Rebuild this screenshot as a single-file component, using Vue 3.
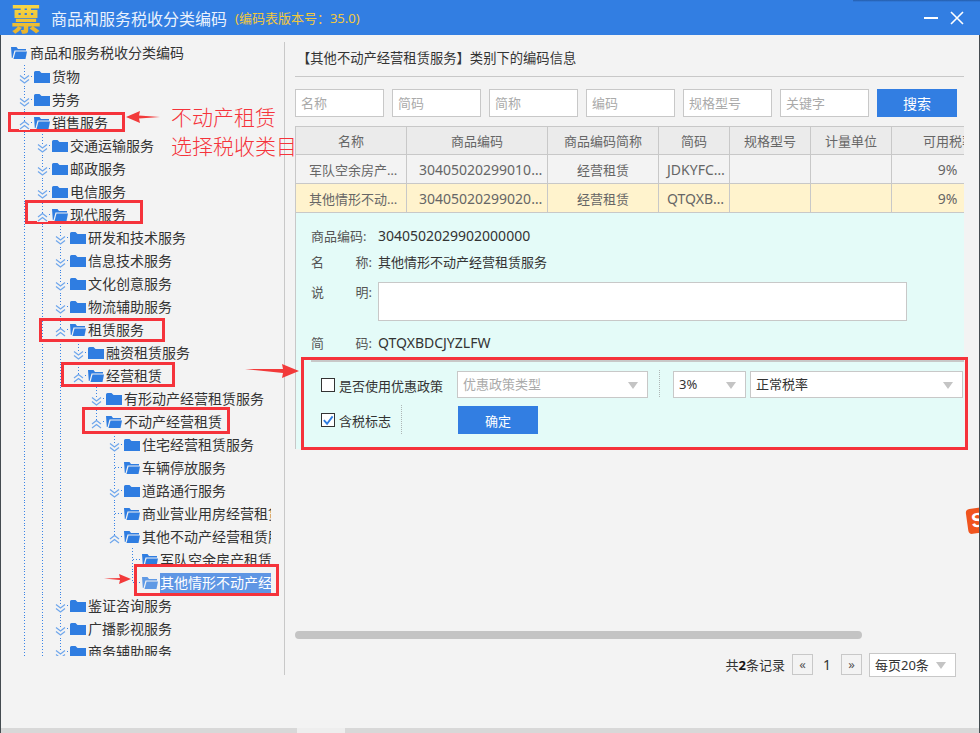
<template>
  <div class="app-window">
    <div class="title-bar">
      <span class="logo">票</span>
      <span class="title-text">商品和服务税收分类编码</span>
      <span class="version">(编码表版本号：35.0)</span>
      <div class="win-btns">
        <svg width="14" height="14" viewBox="0 0 14 14"><path d="M0 7h14" stroke="#fff" stroke-width="2"/></svg>
        <svg width="14" height="14" viewBox="0 0 14 14"><path d="M1 1l12 12M13 1L1 13" stroke="#fff" stroke-width="1.6"/></svg>
      </div>
      <div class="top-shade"></div>
    </div>

    <div class="main">
      <div class="tree-pane">
        <div class="tree">
          <div
            v-for="node in treeRows"
            :key="node.label"
            class="tree-row"
            :class="{ root: node.level === 0 }"
          >
            <span
              v-for="col in node.level - 1"
              :key="col"
              class="guide"
              :class="{ on: node.guides.includes(col) }"
            ></span>
            <span v-if="node.level > 0" class="guide conn" :class="{ last: node.last }">
              <svg v-if="node.toggle" class="toggle" width="11" height="9" viewBox="0 0 11 9">
                <rect width="11" height="9" fill="#f3f3f3"/>
                <path
                  v-if="node.toggle === 'down'"
                  d="M1 .5l4.500 3.500L10 .5M1 4.500l4.500 3.500L10 4.500"
                  fill="none" stroke="#6ea6ec" stroke-width="1.2"
                />
                <path
                  v-else
                  d="M1 4l4.500-3.500L10 4M1 8l4.500-3.500L10 8"
                  fill="none" stroke="#6ea6ec" stroke-width="1.2"
                />
              </svg>
            </span>
            <svg class="folder" :class="{ faded: node.selected }" width="16" height="12" viewBox="0 0 16 12">
              <template v-if="node.open">
                <path d="M0 0h5.500l1.500 2h8v1.500H3.500L1.500 11H.8z" fill="#2f7de1"/>
                <path d="M4.500 4.500H16L14.500 12H2.500z" fill="#2f7de1"/>
              </template>
              <path v-else d="M0 1.500Q0 0 1.500 0h4L7.500 2H16v10H0z" fill="#2f7de1"/>
            </svg>
            <span class="tree-label" :class="{ selected: node.selected }">{{ node.label }}</span>
          </div>
        </div>
      </div>

      <div class="content">
        <div class="content-title">【其他不动产经营租赁服务】类别下的编码信息</div>

        <div class="search-row">
          <input v-for="ph in searchFields" :key="ph" class="search-input" :placeholder="ph" />
          <button class="btn search-btn">搜索</button>
        </div>

        <div class="table-box">
          <table class="code-table">
            <colgroup>
              <col v-for="w in colWidths" :key="w.id" :style="{ width: w.px + 'px' }" />
            </colgroup>
            <thead>
              <tr>
                <th>名称</th>
                <th>商品编码</th>
                <th>商品编码简称</th>
                <th>简码</th>
                <th>规格型号</th>
                <th>计量单位</th>
                <th class="rate-head">可用税率</th>
              </tr>
            </thead>
            <tbody>
              <tr v-for="row in tableRows" :key="row.code" :class="{ active: row.active }">
                <td class="name-cell">{{ row.name }}</td>
                <td class="code-cell">{{ row.code }}</td>
                <td>经营租赁</td>
                <td class="short-cell">{{ row.short }}</td>
                <td></td>
                <td></td>
                <td class="rate-cell">9%</td>
              </tr>
            </tbody>
          </table>

          <div class="detail">
            <div class="detail-row">
              <span class="detail-label">商品编码:</span>
              <span class="num">3040502029902000000</span>
            </div>
            <div class="detail-row">
              <span class="detail-label spread"><i>名</i><i>称:</i></span>
              <span>其他情形不动产经营租赁服务</span>
            </div>
            <div class="detail-row note-row">
              <span class="detail-label spread"><i>说</i><i>明:</i></span>
              <div class="note-box"></div>
            </div>
            <div class="detail-row short-row">
              <span class="detail-label spread"><i>简</i><i>码:</i></span>
              <span class="num">QTQXBDCJYZLFW</span>
            </div>

            <div class="policy">
              <div class="policy-line">
                <label class="check-label policy-check">
                  <span class="checkbox"></span>是否使用优惠政策
                </label>
                <div class="select policy-type muted">优惠政策类型<i class="caret"></i></div>
                <span class="dots tall"></span>
                <div class="select rate-select">3%<i class="caret"></i></div>
                <div class="select kind-select">正常税率<i class="caret"></i></div>
              </div>
              <div class="policy-line second">
                <label class="check-label tax-check">
                  <span class="checkbox">
                    <svg width="13" height="13" viewBox="0 0 13 13"><path d="M2 6l3.500 4L11.500 2" fill="none" stroke="#2f7de1" stroke-width="2"/></svg>
                  </span>含税标志
                </label>
                <span class="dots"></span>
                <button class="btn ok-btn">确定</button>
              </div>
            </div>
          </div>
        </div>

        <div class="h-scroll"><div class="h-thumb"></div></div>

        <div class="pager">
          <span class="pager-total">共<b>2</b>条记录</span>
          <span class="page-btn">«</span>
          <span class="page-num">1</span>
          <span class="page-btn">»</span>
          <div class="select size-select">每页20条<i class="caret"></i></div>
        </div>
      </div>
    </div>

    <div class="bottom-bar">
      <div class="bar-gap"></div>
    </div>

    <!-- 红色标注 -->
    <div v-for="box in markBoxes" :key="box.id" class="mark-box" :class="box.id"></div>
    <svg class="arrow arrow-a" width="34" height="12" viewBox="0 0 34 12"><path d="M0 6L14 0l-1 4.500L34 6 13 7.500 14 12z" fill="#f23a3a"/></svg>
    <svg class="arrow arrow-b" width="54" height="14" viewBox="0 0 54 14"><path d="M0 5l38 0-1-5 17 7-17 7 1-5z" fill="#f23a3a"/></svg>
    <svg class="arrow arrow-c" width="27" height="10" viewBox="0 0 27 10"><path d="M0 4.500l16-.5-1-4 12 5-12 5 1-4z" fill="#f23a3a"/></svg>
    <div class="mark-text">不动产租赁<br />选择税收类目</div>

    <div class="ime-badge"><span>S</span></div>
  </div>
</template>

<script setup>
const searchFields = ['名称', '简码', '简称', '编码', '规格型号', '关键字'];

const colWidths = [
  { id: 'name', px: 111 },
  { id: 'code', px: 141 },
  { id: 'abbr', px: 111 },
  { id: 'short', px: 71 },
  { id: 'spec', px: 81 },
  { id: 'unit', px: 81 },
  { id: 'rate', px: 73 }
];

const tableRows = [
  { name: '军队空余房产租赁服务', code: '3040502029901000000', short: 'JDKYFCZLFW', active: false },
  { name: '其他情形不动产经营租赁服务', code: '3040502029902000000', short: 'QTQXBDCJYZLFW', active: true }
];

const markBoxes = [
  { id: 'm-sale' },
  { id: 'm-modern' },
  { id: 'm-lease' },
  { id: 'm-oper' },
  { id: 'm-estate' },
  { id: 'm-other' },
  { id: 'm-form' }
];

// level 从 1 开始算缩进, guides 是前面还要画竖线的列
const treeRows = [
  { label: '商品和服务税收分类编码', level: 0, open: true, guides: [] },
  { label: '货物', level: 1, toggle: 'down', guides: [] },
  { label: '劳务', level: 1, toggle: 'down', guides: [] },
  { label: '销售服务', level: 1, toggle: 'up', open: true, guides: [] },
  { label: '交通运输服务', level: 2, toggle: 'down', guides: [1] },
  { label: '邮政服务', level: 2, toggle: 'down', guides: [1] },
  { label: '电信服务', level: 2, toggle: 'down', guides: [1] },
  { label: '现代服务', level: 2, toggle: 'up', open: true, guides: [1] },
  { label: '研发和技术服务', level: 3, toggle: 'down', guides: [1, 2] },
  { label: '信息技术服务', level: 3, toggle: 'down', guides: [1, 2] },
  { label: '文化创意服务', level: 3, toggle: 'down', guides: [1, 2] },
  { label: '物流辅助服务', level: 3, toggle: 'down', guides: [1, 2] },
  { label: '租赁服务', level: 3, toggle: 'up', open: true, guides: [1, 2] },
  { label: '融资租赁服务', level: 4, toggle: 'down', guides: [1, 2, 3] },
  { label: '经营租赁', level: 4, toggle: 'up', open: true, last: true, guides: [1, 2, 3] },
  { label: '有形动产经营租赁服务', level: 5, toggle: 'down', guides: [1, 2, 3] },
  { label: '不动产经营租赁', level: 5, toggle: 'up', open: true, last: true, guides: [1, 2, 3] },
  { label: '住宅经营租赁服务', level: 6, toggle: 'down', guides: [1, 2, 3] },
  { label: '车辆停放服务', level: 6, open: true, guides: [1, 2, 3] },
  { label: '道路通行服务', level: 6, toggle: 'down', guides: [1, 2, 3] },
  { label: '商业营业用房经营租赁服务', level: 6, open: true, guides: [1, 2, 3] },
  { label: '其他不动产经营租赁服务', level: 6, toggle: 'up', open: true, last: true, guides: [1, 2, 3] },
  { label: '军队空余房产租赁服务', level: 7, open: true, guides: [1, 2, 3] },
  { label: '其他情形不动产经营租赁服务', level: 7, open: true, last: true, selected: true, guides: [1, 2, 3] },
  { label: '鉴证咨询服务', level: 3, toggle: 'down', guides: [1, 2] },
  { label: '广播影视服务', level: 3, toggle: 'down', guides: [1, 2] },
  { label: '商务辅助服务', level: 3, toggle: 'down', guides: [1, 2] }
];
</script>

<style>
html,
body {
  margin: 0;
  background: #f3f3f3;
}
</style>

<style scoped>
.app-window {
  position: relative;
  width: 980px;
  height: 733px;
  overflow: hidden;
  display: flex;
  flex-direction: column;
  box-sizing: border-box;
  background: #f3f3f3;
  color: #333;
  font-family: "Noto Sans", "Noto Sans CJK SC", sans-serif;
  font-size: 13px;
}

.app-window::before {
  content: "";
  position: absolute;
  left: 0;
  top: 35px;
  bottom: 0;
  width: 1px;
  background: #444b50;
}

.app-window::after {
  content: "";
  position: absolute;
  right: 0;
  top: 35px;
  bottom: 0;
  width: 1px;
  background: #444b50;
}

/* 标题栏 */
.title-bar {
  position: relative;
  height: 35px;
  flex: none;
  display: flex;
  align-items: center;
  background: #327ee2;
  padding-left: 10px;
}

.logo {
  width: 32px;
  font-family: "Noto Sans CJK SC", sans-serif;
  font-size: 30px;
  font-weight: 900;
  line-height: 35px;
  text-align: center;
  background: linear-gradient(#f8dc4a, #e9b12a);
  -webkit-background-clip: text;
  background-clip: text;
  color: transparent;
}

.title-text {
  margin-left: 9px;
  font-size: 16px;
  color: #eaf2fd;
}

.version {
  margin-left: 8px;
  font-size: 13px;
  color: #f3c83c;
}

.win-btns {
  margin-left: auto;
  margin-right: 16px;
  display: flex;
  align-items: center;
  gap: 12px;
}

.top-shade {
  position: absolute;
  left: 853px;
  right: 0;
  top: 0;
  height: 2px;
  background: linear-gradient(rgba(20, 50, 100, 0.45), rgba(20, 50, 100, 0));
}

/* 左侧树 */
.main {
  flex: 1;
  min-height: 0;
  display: flex;
}

.tree-pane {
  width: 285px;
  height: 633px;
  margin-top: 7px;
  flex: none;
  box-sizing: border-box;
  border-right: 1px solid #c8c8c8;
}

.tree {
  width: 271px;
  height: 614px;
  overflow: hidden;
}

.tree-row {
  display: flex;
  align-items: center;
  height: 23px;
  padding-left: 15px;
  white-space: nowrap;
  font-size: 14px;
}

.tree-row.root {
  padding-left: 10px;
  padding-bottom: 2px;
  height: 21px;
}

.tree-row.root .tree-label {
  margin-left: 3px;
}

.guide {
  position: relative;
  flex: none;
  width: 18px;
  height: 23px;
}

.guide.on,
.guide.conn {
  background-image: repeating-linear-gradient(to bottom, #3a84e6 0 1px, transparent 1px 3px);
  background-repeat: no-repeat;
  background-position: 9px 0;
  background-size: 1px 100%;
}

.guide.conn.last {
  background-size: 1px 50%;
}

.guide.conn::after {
  content: "";
  position: absolute;
  left: 10px;
  right: 0;
  top: 11px;
  height: 1px;
  background-image: repeating-linear-gradient(to right, #3a84e6 0 1px, transparent 1px 3px);
}

.toggle {
  position: absolute;
  left: 4px;
  top: 10px;
  z-index: 1;
}

.folder {
  flex: none;
  margin-left: 1px;
}

.folder.faded {
  opacity: 0.75;
}

.tree-label {
  margin-left: 2px;
  line-height: 20px;
}

.tree-label.selected {
  background: #5f96e4;
  color: #fff;
}

/* 右侧内容 */
.content {
  flex: 1;
  min-width: 0;
  box-sizing: border-box;
  padding-left: 10px;
}

.content-title {
  height: 42px;
  box-sizing: border-box;
  margin-right: 16px;
  padding: 12px 0 0 2px;
  line-height: 22px;
  font-size: 13.3px;
  border-bottom: 1px solid #c8c8c8;
  color: #333;
}

.search-row {
  display: flex;
  gap: 8px;
  margin-top: 12px;
}

.search-input {
  width: 89px;
  height: 28px;
  box-sizing: border-box;
  padding: 0 5px;
  border: 1px solid #c8c8c8;
  background: #fff;
  font: inherit;
  outline: none;
}

.search-input::placeholder {
  color: #aaa;
}

.btn {
  border: none;
  background: #327ee2;
  color: #fff;
  font: inherit;
}

.search-btn {
  width: 80px;
  height: 28px;
  font-size: 14px;
}

.table-box {
  width: 669px;
  margin-top: 9px;
  overflow: hidden;
}

.code-table {
  width: 669px;
  table-layout: fixed;
  border-collapse: collapse;
  border: 1px solid #c8c8c8;
  border-right: none;
  text-align: center;
  color: #666;
}

.code-table th {
  height: 27px;
  padding: 0;
  border: 1px solid #c8c8c8;
  background: #ebebeb;
  font-weight: 400;
  color: #666;
  white-space: nowrap;
  overflow: hidden;
}

.code-table th.rate-head {
  text-align: left;
  padding-left: 31px;
  border-right: none;
}

.code-table td {
  height: 28px;
  padding: 0;
  border: 1px solid #c8c8c8;
  white-space: nowrap;
  overflow: hidden;
  text-overflow: ellipsis;
}

.code-table tr.active td {
  background: #fff3cd;
}

.code-table td.name-cell {
  padding: 0 6px 0 13px;
}

.code-table td.code-cell {
  padding: 0 1px 0 12px;
  font-size: 14px;
  text-align: left;
}

.code-table td.short-cell {
  padding: 0 3px 0 8px;
  font-size: 14px;
}

.code-table td.rate-cell {
  text-align: right;
  padding-right: 7px;
  border-right: none;
  font-size: 14px;
}

.detail {
  height: 236px;
  box-sizing: border-box;
  padding: 12px 0 0 15px;
  border-left: 1px solid #c8c8c8;
  background: #e4fbf8;
}

.detail-row {
  display: flex;
  align-items: center;
  height: 20px;
  margin-bottom: 6px;
  color: #333;
}

.detail-label {
  width: 67px;
  flex: none;
  color: #555;
}

.detail-label.spread {
  display: inline-flex;
  justify-content: space-between;
  width: 61px;
  margin-right: 6px;
}

.detail-label i {
  font-style: normal;
}

.num {
  font-size: 14px;
}

.note-row {
  align-items: flex-start;
  height: 39px;
  margin: 11px 0 0;
}

.note-box {
  width: 529px;
  height: 39px;
  box-sizing: border-box;
  border: 1px solid #c8c8c8;
  background: #fff;
}

.short-row {
  margin: 11px 0 0;
}

.policy {
  margin-top: 8px;
  border-top: 2px solid #c8c8c8;
}

.policy-line {
  display: flex;
  align-items: center;
  height: 28px;
  margin-top: 8px;
}

.policy-line.second {
  margin-top: 7px;
  height: 30px;
}

.check-label {
  display: flex;
  align-items: center;
  padding-left: 10px;
  color: #333;
}

.policy-check {
  width: 136px;
  flex: none;
  padding-top: 2px;
}

.tax-check {
  width: 80px;
  flex: none;
}

.checkbox {
  width: 14px;
  height: 14px;
  box-sizing: border-box;
  margin-right: 4px;
  border: 1px solid #333;
  background: #fff;
  display: inline-flex;
}

.select {
  position: relative;
  height: 27px;
  line-height: 25px;
  box-sizing: border-box;
  padding-left: 5px;
  border: 1px solid #c8c8c8;
  background: #fff;
  color: #333;
}

.select.muted {
  color: #aaa;
}

.caret {
  position: absolute;
  right: 9px;
  top: 10px;
  border-style: solid;
  border-width: 7px 5px 0;
  border-color: #c4c4c4 transparent transparent;
}

.policy-type {
  width: 191px;
}

.rate-select {
  width: 73px;
}

.kind-select {
  width: 213px;
  margin-left: 4px;
}

.dots {
  align-self: stretch;
  width: 1px;
  flex: none;
  background-image: repeating-linear-gradient(to bottom, #aeb6b6 0 1px, transparent 1px 2px);
}

.dots.tall {
  margin: 0 13px 0 11px;
}

.ok-btn {
  width: 80px;
  height: 28px;
  margin-left: 56px;
}

.h-scroll {
  height: 8px;
  margin-top: 182px;
}

.h-thumb {
  width: 567px;
  height: 8px;
  border-radius: 4px;
  background: #c4c4c4;
}

.pager {
  display: flex;
  align-items: center;
  justify-content: flex-end;
  margin: 14px 24px 0 0;
  height: 23px;
}

.pager-total b {
  color: #111;
}

.page-btn {
  width: 21px;
  height: 21px;
  box-sizing: border-box;
  margin-left: 7px;
  border: 1px solid #c8c8c8;
  text-align: center;
  line-height: 19px;
  color: #555;
}

.page-num {
  width: 28px;
  margin-left: 0;
  text-align: center;
  margin-right: -7px;
  font-size: 14px;
}

.size-select {
  width: 87px;
  height: 24px;
  line-height: 22px;
  margin-left: 7px;
  font-size: 13px;
}

.size-select .caret {
  top: 8px;
}

.bottom-bar {
  position: absolute;
  left: 1px;
  right: 1px;
  bottom: 0;
  height: 5px;
  background: #d8d8d8;
}

.bar-gap {
  width: 48px;
  height: 5px;
  margin-left: 296px;
  background: #eeeeee;
}

/* 标注都是盖在截图上的 */
.mark-box {
  position: absolute;
  box-sizing: border-box;
  border: 3px solid #f5333b;
  pointer-events: none;
}

.m-sale { left: 8px; top: 112px; width: 117px; height: 20px; }
.m-modern { left: 25px; top: 200px; width: 118px; height: 24px; }
.m-lease { left: 39px; top: 318px; width: 126px; height: 24px; }
.m-oper { left: 61px; top: 362px; width: 114px; height: 25px; }
.m-estate { left: 82px; top: 407px; width: 148px; height: 27px; }
.m-other { left: 134px; top: 564px; width: 145px; height: 32px; }
.m-form { left: 301px; top: 357px; width: 667px; height: 93px; }

.arrow {
  position: absolute;
}

.arrow-a { left: 126px; top: 111px; }
.arrow-b { left: 245px; top: 364px; }
.arrow-c { left: 104px; top: 574px; }

.mark-text {
  position: absolute;
  left: 171px;
  top: 102px;
  font-family: "Noto Sans CJK SC", sans-serif;
  font-size: 21px;
  font-weight: 300;
  line-height: 29px;
  color: #f5333b;
  white-space: nowrap;
}

.ime-badge {
  position: absolute;
  left: 967px;
  top: 508px;
  width: 22px;
  height: 25px;
  border-radius: 4px;
  background: #f0541e;
  transform: rotate(-8deg);
  color: #fff;
  font-family: "Liberation Sans", sans-serif;
  font-weight: 700;
  font-size: 20px;
  line-height: 25px;
  text-align: center;
}
</style>
